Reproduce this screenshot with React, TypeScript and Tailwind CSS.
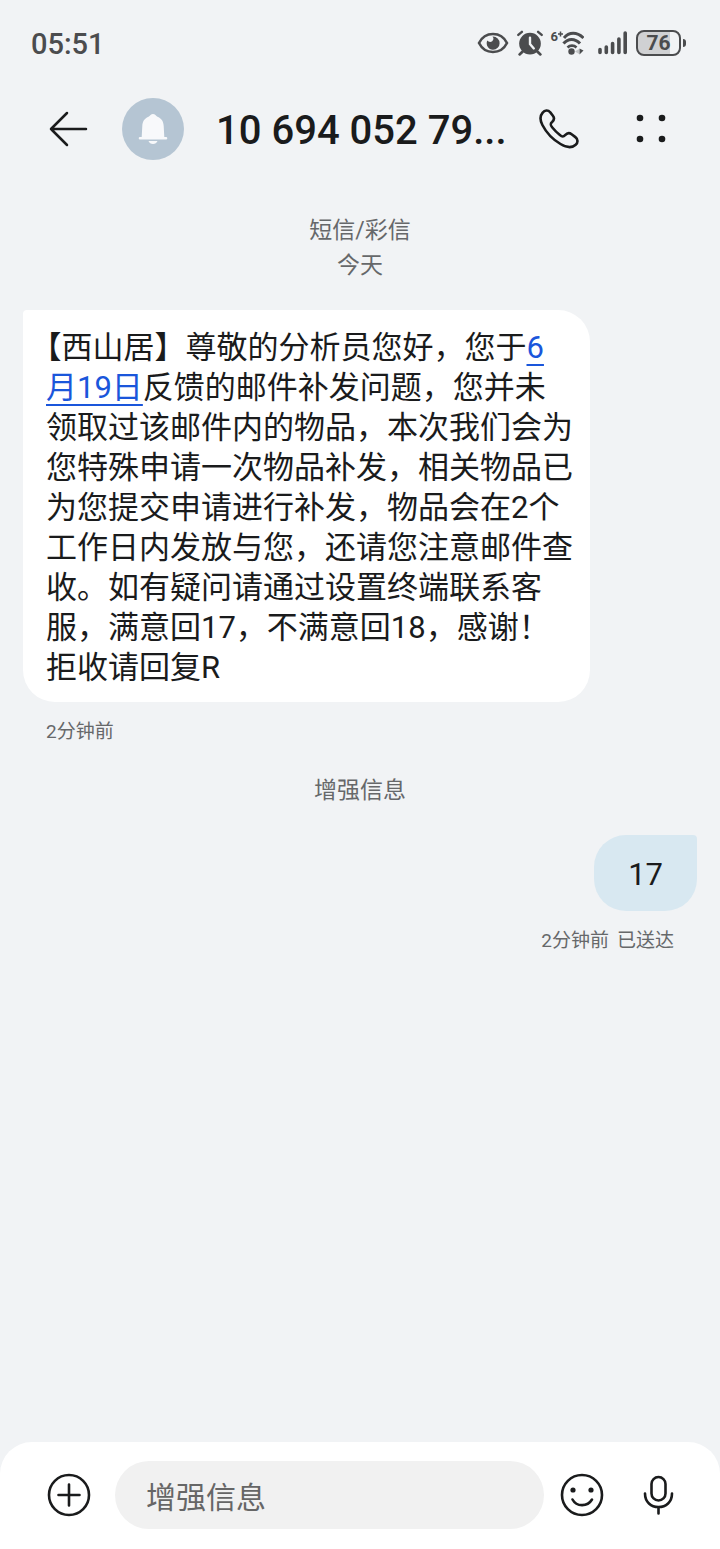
import clsx from 'clsx';
import { useState } from 'react';

interface BubbleProps {
  children: React.ReactNode;
  meta: string[];
  outgoing?: boolean;
}

function StatusBar() {
  return (
    <div className="flex h-[86px] items-center justify-between pl-[31px] pr-[34px] text-[#4b4c4e]">
      <time className="pt-1 text-[29px] font-medium">05:51</time>
      <div className="flex items-center">
        <svg className="mr-2 h-6 w-8" viewBox="0 0 32 24" fill="none">
          <path d="M2 12C5 6 10 3 16 3s11 3 14 9c-3 6-8 9-14 9S5 18 2 12Z" stroke="currentColor" strokeWidth="2.6" />
          <path
            d="M15.500 5.600c1.500 1.500 1.200 3.400-.3 4.600-1.500 1.200-3.700.8-5-.7-1.800 4.500 1.300 9.300 5.800 9.300a6.600 6.600 0 0 0 0-13.200Z"
            fill="currentColor"
          />
        </svg>
        <svg className="mr-2 size-[26px]" viewBox="0 0 24 24" fill="none" stroke="currentColor" strokeLinecap="round">
          <circle cx="12" cy="12.500" r="10" fill="currentColor" stroke="none" />
          <path d="M1.200 4.500 4.500 1.700M22.800 4.500l-3.300-2.800" strokeWidth="2.200" />
          <path d="m5 20-2.500 2.500M19 20l2.500 2.500" strokeWidth="2.600" />
          <path d="M12 7v6l3.500 4" stroke="#f1f3f5" strokeWidth="2.200" />
        </svg>
        <div className="mr-[14px] flex">
          <span className="text-[13px] leading-3 font-bold">6</span>
          <svg className="h-6 w-[26px]" viewBox="-2 0 26 24" fill="none" stroke="currentColor">
            <path d="M-2 3h5M.5.5v5" strokeWidth="1.500" />
            <path d="M4 7C9 .8 17 .8 23.500 7" strokeWidth="3" />
            <path d="M3.500 12.500c4.500-5.500 11.500-5.500 16.500 0" strokeWidth="3" />
            <path d="M7.500 16.500c2.500-2.500 6.500-2.500 9 0" strokeWidth="2.600" />
            <circle cx="11.500" cy="20.500" r="3.200" fill="currentColor" stroke="none" />
            <path d="m19 18-4 2.500 4 2.500Z" fill="#c3c5c7" stroke="none" />
            <path d="M19.500 17.500v6l4-4Z" fill="currentColor" stroke="none" />
          </svg>
        </div>
        <svg
          className="mr-2 h-6 w-[30px]"
          viewBox="0 0 30 24"
          stroke="currentColor"
          strokeWidth="3.600"
          strokeLinecap="round"
        >
          <path d="M2 18.500v3M8.300 16v5.500M14.600 12.500v9M20.900 8v13.500M27.200 2v19.500" />
        </svg>
        <div className="flex h-[26px] w-[45px] items-center justify-center rounded-lg border-2 border-[#4b4c4e] bg-linear-to-r from-[#d0d1d3] from-78% to-transparent to-78% pt-0.5 text-[21px] font-bold">
          76
        </div>
        <div className="ml-0.5 h-2 w-[3px] rounded-r bg-[#4b4c4e]" />
      </div>
    </div>
  );
}

function Header() {
  return (
    <header className="flex h-[86px] items-center pl-12 pr-[53px]">
      <button aria-label="返回" className="mr-[34px] shrink-0">
        <svg className="h-10 w-10" viewBox="0 0 40 40" fill="none" stroke="currentColor" strokeWidth="2.500">
          <path d="M19 4 3 20l16 16M3 20h35" strokeLinecap="round" strokeLinejoin="round" />
        </svg>
      </button>
      <div className="flex size-[62px] shrink-0 items-center justify-center rounded-full bg-[#b5c5d3]">
        <svg className="h-8 w-8" viewBox="0 0 32 32" fill="#f8f9fb">
          <path d="M16 1c2 0 3 2 4.500 2.700C25 5.500 26.500 9 26.700 13l.6 11H29a1.300 1.300 0 0 1 0 2.600H3A1.300 1.300 0 0 1 3 24h1.700l.6-11c.2-4 1.700-7.500 6.200-9.300C13 3 14 1 16 1Z" />
          <path d="M11.500 28h9c-.8 2-2.300 3-4.500 3s-3.700-1-4.500-3Z" />
        </svg>
      </div>
      <h1 className="mr-7 ml-8 min-w-0 flex-1 pt-1 text-[40px] font-medium whitespace-nowrap">10 694 052 79...</h1>
      <button aria-label="拨打电话" className="mr-14 shrink-0">
        <svg className="h-10 w-10" viewBox="0 0 40 40" fill="none" stroke="currentColor" strokeWidth="2.600">
          <path
            d="M3.500 3.800C5.800 1 9 .8 11.300 3.400l2.600 3.300c1.800 2.300 1.300 4.300-.8 6.300-2 1.800-1.800 3 0 5.200 2.300 2.800 4.700 5.400 7.800 7.900 2.300 1.900 3.400 2 5.200 0 2-2.300 4.200-2.700 6.500-.9l3.800 2.900c2.800 2.200 2.700 5.500.3 7.600-3.700 3.400-9.200 2.900-15.200-.7C13.500 30.300 7 23 3.400 16 1 11.300.8 7 3.500 3.800Z"
            strokeLinejoin="round"
          />
        </svg>
      </button>
      <button aria-label="更多" className="shrink-0">
        <svg className="h-8 w-8" viewBox="0 0 32 32" fill="currentColor">
          <circle cx="5" cy="5" r="3.300" />
          <circle cx="27" cy="5" r="3.300" />
          <circle cx="5" cy="26" r="3.300" />
          <circle cx="27" cy="26" r="3.300" />
        </svg>
      </button>
    </header>
  );
}

function Bubble({ children, meta, outgoing = false }: BubbleProps) {
  return (
    <article className={clsx('flex flex-col', outgoing ? 'items-end' : 'items-start')}>
      <div
        className={clsx(
          'max-w-full rounded-[32px] text-[31px] leading-10',
          outgoing
            ? 'rounded-tr bg-[#d8e8f1] px-[34px] pt-5 pb-4'
            : 'w-[567px] rounded-tl bg-white pt-[18px] pb-[14px] pl-[23px]',
        )}
      >
        {children}
      </div>
      <p className="mt-[18px] flex gap-2 px-[23px] text-[19px] leading-6 text-[#66686a]">
        {meta.map(item => (
          <span key={item}>{item}</span>
        ))}
      </p>
    </article>
  );
}

function Composer() {
  const [draft, setDraft] = useState('');

  return (
    <form className="flex items-center rounded-t-[32px] bg-white pt-[19px] pr-10 pb-5 pl-[47px]">
      <button type="button" aria-label="添加" className="mr-6 shrink-0">
        <svg className="size-11" viewBox="0 0 44 44" fill="none" stroke="currentColor" strokeWidth="2.600">
          <circle cx="22" cy="22" r="20" />
          <path d="M22 11.500v21M11.500 22h21" strokeLinecap="round" />
        </svg>
      </button>
      <input
        type="text"
        aria-label="增强信息"
        placeholder="增强信息"
        value={draft}
        onChange={e => setDraft(e.target.value)}
        className="h-[68px] min-w-0 flex-1 rounded-full bg-[#f1f1f1] px-[31px] pt-1 text-[30px] outline-none placeholder:text-[#666666]"
      />
      <button type="button" aria-label="表情" className="mr-8 ml-4 shrink-0">
        <svg className="size-11" viewBox="0 0 44 44" fill="none" stroke="currentColor" strokeWidth="2.600">
          <circle cx="22" cy="22" r="20" />
          <circle cx="13" cy="17" r="2.600" fill="currentColor" stroke="none" />
          <circle cx="31" cy="17" r="2.600" fill="currentColor" stroke="none" />
          <path d="M12.500 26.500c4 7.500 15 7.500 19.500 0" strokeLinecap="round" />
        </svg>
      </button>
      <button type="button" aria-label="语音" className="shrink-0">
        <svg className="size-11" viewBox="0 0 44 44" fill="none" stroke="currentColor" strokeWidth="2.600">
          <rect x="15.500" y="4" width="14" height="23.500" rx="7" />
          <path d="M9 20.500C9 29 15 34 22.500 34S36 29 36 20.500M22.500 34v6.500" strokeLinecap="round" />
        </svg>
      </button>
    </form>
  );
}

export default function App() {
  return (
    <div className="flex min-h-screen flex-col bg-[#f1f3f5] font-[Roboto,'Noto_Sans_CJK_SC',sans-serif] text-[#1a1b1c]">
      <StatusBar />
      <Header />
      <main className="flex-1 px-[23px] pt-[41px]">
        <p className="mb-[27px] text-center text-[23px] leading-[35px] text-[#66686a]">
          短信/彩信
          <br />
          今天
        </p>
        <Bubble meta={['2分钟前']}>
          <p className="whitespace-nowrap [text-spacing-trim:trim-start]">
            【西山居】尊敬的分析员您好，您于
            <a href="#date" className="text-[#1a56db] underline decoration-2 underline-offset-6">
              6<br />
              月19日
            </a>
            反馈的邮件补发问题，您并未
            <br />
            领取过该邮件内的物品，本次我们会为
            <br />
            您特殊申请一次物品补发，相关物品已
            <br />
            为您提交申请进行补发，物品会在2个
            <br />
            工作日内发放与您，还请您注意邮件查
            <br />
            收。如有疑问请通过设置终端联系客
            <br />
            服，满意回17，不满意回18，感谢！
            <br />
            拒收请回复R
          </p>
        </Bubble>
        <p className="mt-[29px] mb-[27px] text-center text-[23px] leading-[35px] text-[#66686a]">增强信息</p>
        <Bubble outgoing meta={['2分钟前', '已送达']}>
          17
        </Bubble>
      </main>
      <Composer />
    </div>
  );
}
